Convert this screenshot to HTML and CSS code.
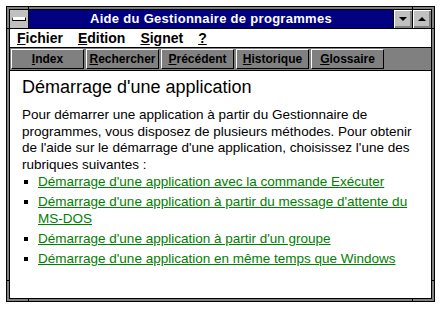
FILE: index.html
```html
<!DOCTYPE html>
<html>
<head lang="fr">
    <meta charset="UTF-8">
    <title>Aide du Gestionnaire de programmes</title>
    <link rel="stylesheet" href="styles.css">
</head>
<body>

<div class="win">
    <!-- marques de redimensionnement du cadre -->
    <i class="mark v" style="left:21px;top:-1px"></i>
    <i class="mark v" style="left:405px;top:-1px"></i>
    <i class="mark v" style="left:21px;bottom:-1px"></i>
    <i class="mark v" style="left:405px;bottom:-1px"></i>
    <i class="mark h" style="top:21px;left:-1px"></i>
    <i class="mark h" style="top:273px;left:-1px"></i>
    <i class="mark h" style="top:21px;right:-1px"></i>
    <i class="mark h" style="top:273px;right:-1px"></i>

    <div class="inner">
        <div class="titlebar">
            <div class="sysbox"><span class="sysbar"></span></div>
            <div class="title">Aide du Gestionnaire de programmes</div>
            <div class="tbtn"><span class="tri down"></span></div>
            <div class="tbtn last"><span class="tri up"></span></div>
        </div>

        <ul class="menu">
            <li><u>F</u>ichier</li>
            <li><u>E</u>dition</li>
            <li><u>S</u>ignet</li>
            <li><u>?</u></li>
        </ul>

        <div class="toolbar">
            <span class="btn"><u>I</u>ndex</span>
            <span class="btn"><u>R</u>echercher</span>
            <span class="btn"><u>P</u>récédent</span>
            <span class="btn"><u>H</u>istorique</span>
            <span class="btn"><u>G</u>lossaire</span>
        </div>

        <div class="content">
            <h1>Démarrage d'une application</h1>
            <p>Pour démarrer une application à partir du Gestionnaire de<br>
               programmes, vous disposez de plusieurs méthodes. Pour obtenir<br>
               de l'aide sur le démarrage d'une application, choisissez l'une des<br>
               rubriques suivantes :</p>
            <ul class="links">
                <li><a href="#">Démarrage d'une application avec la commande Exécuter</a></li>
                <li><a href="#">Démarrage d'une application à partir du message d'attente du <span class="nobr">MS-DOS</span></a></li>
                <li><a href="#">Démarrage d'une application à partir d'un groupe</a></li>
                <li><a href="#">Démarrage d'une application en même temps que Windows</a></li>
            </ul>
        </div>
    </div>
</div>

</body>
</html>
```

FILE: styles.css
```css
* {
    padding: 0;
    margin: 0;
    list-style: none;
    box-sizing: border-box;
}
body {
    background: #fff;
    font-family: "Liberation Sans", Arial, sans-serif;
}
.win {
    position: relative;
    width: 429px;
    height: 296px;
    margin: 6px 0 0 6px;
    border: 1px solid #000;
    padding: 2px;
    background: #808080;
}
.mark {
    position: absolute;
    background: #000;
}
.mark.v {
    width: 1px;
    height: 4px;
}
.mark.h {
    width: 4px;
    height: 1px;
}
.inner {
    height: 100%;
    border: 1px solid #000;
    background: #fff;
    display: flex;
    flex-direction: column;
}
.titlebar {
    display: flex;
    height: 19px;
    border-bottom: 1px solid #000;
}
.sysbox {
    width: 19px;
    background: #c0c0c0;
    border-right: 1px solid #000;
    padding: 7px 0 0 2px;
}
.sysbar {
    display: block;
    width: 14px;
    height: 4px;
    background: #fff;
    border: 1px solid #000;
    border-top-color: #fff;
    border-left-color: #404040;
}
.title {
    flex: 1;
    background: #000080;
    color: #fff;
    font: 700 13px/18px "Liberation Sans", Arial, sans-serif;
    text-align: center;
    letter-spacing: 0.3px;
}
.tbtn {
    width: 19px;
    background: #c0c0c0;
    border-left: 1px solid #000;
    box-shadow: inset 1px 1px 0 #fff, inset -2px -2px 0 #808080;
    display: flex;
    align-items: center;
    justify-content: center;
}
.tri {
    width: 0;
    height: 0;
    border-left: 4px solid transparent;
    border-right: 4px solid transparent;
}
.tri.down {
    border-top: 4px solid #000;
}
.tri.up {
    border-bottom: 4px solid #000;
}
.menu {
    display: flex;
    height: 19px;
    border-bottom: 1px solid #000;
    padding-left: 7px;
    font: 700 14px/18px "Liberation Sans", Arial, sans-serif;
}
.menu li {
    margin-right: 15px;
}
.toolbar {
    display: flex;
    gap: 2px;
    height: 23px;
    padding: 1px;
    background: #808080;
    border-bottom: 1px solid #000;
}
.btn {
    width: 73px;
    height: 20px;
    border: 1px solid #000;
    border-top-color: #fff;
    border-left-color: #fff;
    text-align: center;
    font: 700 12px/18px "Liberation Sans", Arial, sans-serif;
    color: #000;
}
.content {
    flex: 1;
    padding: 6px 6px 0 12px;
    color: #000;
}
h1 {
    font: 400 18px/20px "Liberation Sans", Arial, sans-serif;
    margin-bottom: 10px;
}
p {
    font: 400 13.5px/16.5px "Liberation Sans", Arial, sans-serif;
    white-space: nowrap;
}
.links li {
    position: relative;
    padding-left: 16px;
    margin-bottom: 3px;
    font: 400 13.5px/17px "Liberation Sans", Arial, sans-serif;
}
.links li:before {
    content: "";
    position: absolute;
    left: 2px;
    top: 7px;
    width: 4px;
    height: 4px;
    background: #000;
}
.links a {
    color: #008000;
    text-decoration: underline;
}
.nobr {
    white-space: nowrap;
}
```
